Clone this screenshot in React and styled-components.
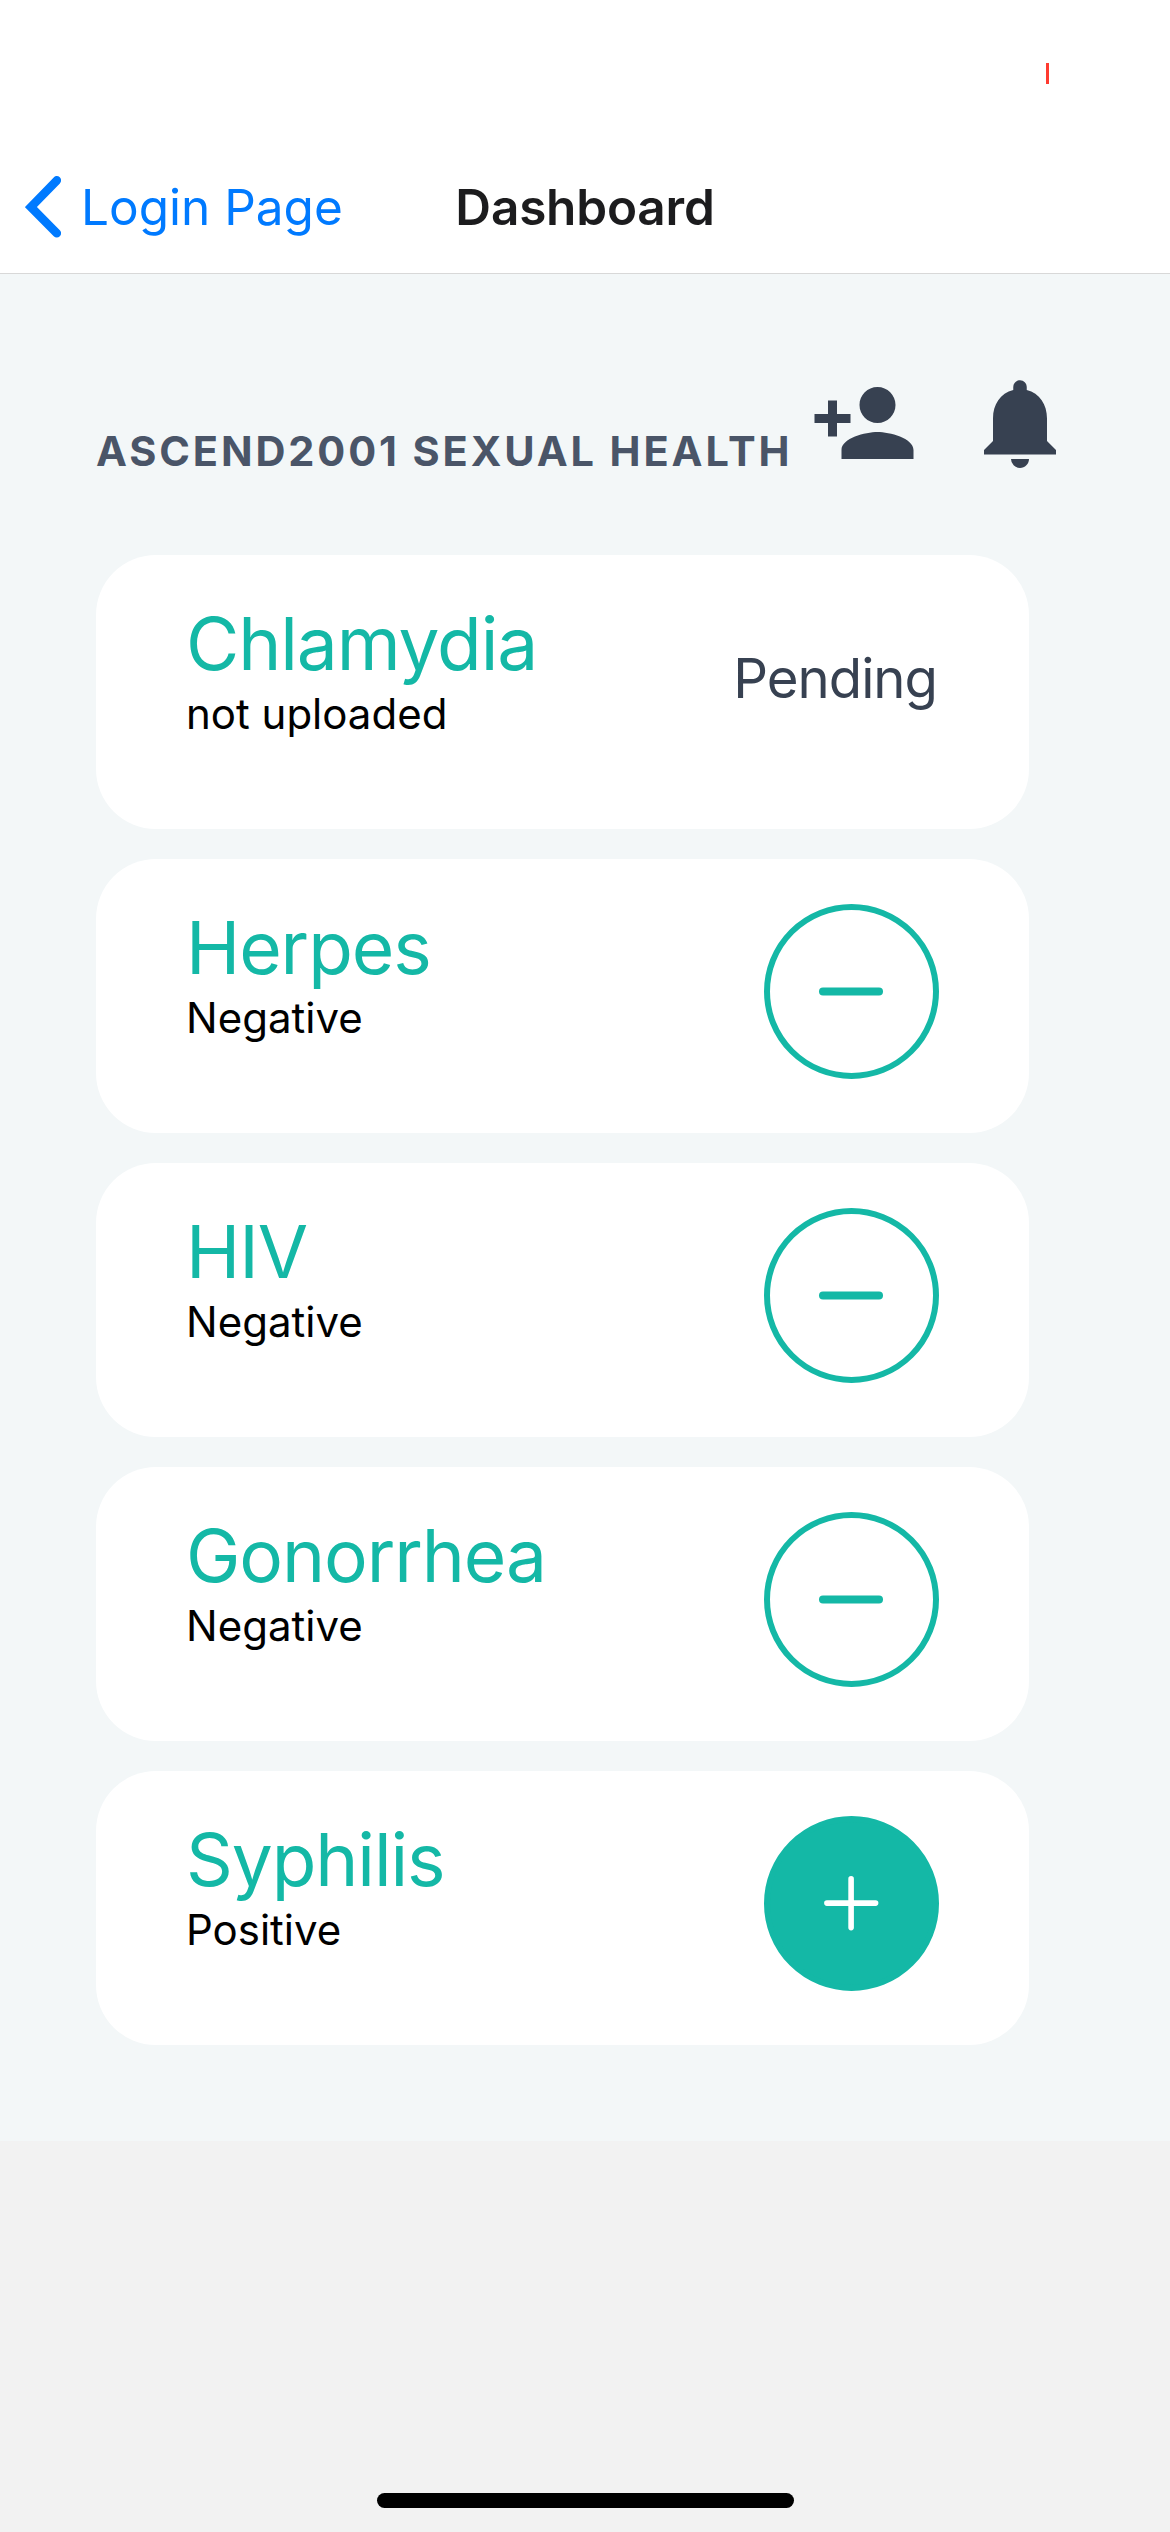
import React from 'react';
import styled, { createGlobalStyle } from 'styled-components';
import { MdPersonAdd, MdNotifications } from 'react-icons/md';

const GlobalStyle = createGlobalStyle`
  * {
    box-sizing: border-box;
  }

  body {
    margin: 0;
    background: #f2f2f2;
    font-family: Inter, "Liberation Sans", sans-serif;
  }
`;

const Screen = styled.div`
  width: 1170px;
  height: 2532px;
  display: flex;
  flex-direction: column;
  background: #f2f2f2;
  overflow: hidden;
`;

const StatusBar = styled.div`
  height: 141px;
  display: flex;
  justify-content: flex-end;
  padding: 63px 121px 0 0;
  background: #fff;
`;

const BatteryLevel = styled.div`
  width: 3px;
  height: 21px;
  background: #ff3b30;
`;

const NavBar = styled.div`
  height: 133px;
  display: grid;
  grid-template-columns: 1fr auto 1fr;
  align-items: center;
  background: #fff;
  border-bottom: 1px solid #d8d8d8;
`;

const BackButton = styled.button`
  display: flex;
  align-items: center;
  gap: 20px;
  padding: 0 0 0 25px;
  border: none;
  background: none;
  color: #007aff;
  font-family: inherit;
  font-size: 49.5px;
  line-height: 62px;
  white-space: nowrap;
`;

const NavTitle = styled.h1`
  margin: 0;
  color: #1c1c1e;
  font-size: 49.5px;
  font-weight: 600;
  line-height: 62px;
  letter-spacing: -0.2px;
`;

const Content = styled.main`
  height: 1867px;
  padding: 95px 96px 0;
  background: #f3f7f8;
`;

const Header = styled.div`
  height: 186px;
  display: flex;
  justify-content: space-between;
  align-items: flex-start;
`;

const Title = styled.h2`
  margin: 0;
  padding-top: 52px;
  color: #4a5568;
  font-size: 41.5px;
  font-weight: 700;
  line-height: 60px;
  letter-spacing: 2.88px;
  text-transform: uppercase;
  white-space: nowrap;
`;

const Actions = styled.div`
  display: flex;
  gap: 48px;
  color: #374151;
  font-size: 108px;

  svg {
    display: block;
  }
`;

const Results = styled.div`
  width: 933px;
  display: flex;
  flex-direction: column;
  gap: 30px;
`;

const Card = styled.div`
  height: 274px;
  display: flex;
  justify-content: space-between;
  align-items: flex-start;
  padding: 45px 90px;
  background: #fff;
  border-radius: 60px;
`;

const Name = styled.div`
  color: #14b8a6;
  font-size: 73px;
  line-height: 87px;
  letter-spacing: -1.1px;
`;

const Status = styled.div`
  color: #000;
  font-size: 42px;
  line-height: 53px;
`;

const Pending = styled.div`
  margin: 45px 2px 0 0;
  color: #374151;
  font-size: 54.5px;
  line-height: 66px;
  letter-spacing: -1px;
`;

const Badge = styled.div`
  width: 175px;
  height: 175px;
  border: 6px solid #14b8a6;
  border-radius: 50%;
  background: ${({ $filled }) => ($filled ? '#14b8a6' : '#fff')};
  color: ${({ $filled }) => ($filled ? '#fff' : '#14b8a6')};

  svg {
    display: block;
  }
`;

const HomeIndicator = styled.div`
  width: 417px;
  height: 15px;
  margin: auto auto 24px 377px;
  border-radius: 8px;
  background: #000;
`;

const results = [
  { name: 'Chlamydia', status: 'not uploaded', type: 'pending' },
  { name: 'Herpes', status: 'Negative', type: 'negative' },
  { name: 'HIV', status: 'Negative', type: 'negative' },
  { name: 'Gonorrhea', status: 'Negative', type: 'negative' },
  { name: 'Syphilis', status: 'Positive', type: 'positive' },
];

const BackIcon = () => (
  <svg width="36" height="62" viewBox="0 0 36 62" fill="none">
    <path d="M31.8 4.4 5.9 31 31.8 57.2" stroke="currentColor" strokeWidth="8.6" strokeLinecap="round" />
  </svg>
);

const ResultIcon = ({ positive }) => (
  <Badge $filled={positive}>
    <svg width="163" height="163" viewBox="0 0 163 163" stroke="currentColor" strokeLinecap="round">
      {positive ? (
        <path d="M56.9 81.1H105.6M81.1 56.9V105.6" strokeWidth="5.6" />
      ) : (
        <path d="M53 81.5H109" strokeWidth="8" />
      )}
    </svg>
  </Badge>
);

const ResultCard = ({ name, status, type }) => (
  <Card>
    <div>
      <Name>{name}</Name>
      <Status>{status}</Status>
    </div>
    {type === 'pending' ? <Pending>Pending</Pending> : <ResultIcon positive={type === 'positive'} />}
  </Card>
);

const App = () => {
  return (
    <Screen>
      <GlobalStyle />
      <StatusBar>
        <BatteryLevel />
      </StatusBar>
      <NavBar>
        <BackButton>
          <BackIcon />
          Login Page
        </BackButton>
        <NavTitle>Dashboard</NavTitle>
      </NavBar>
      <Content>
        <Header>
          <Title>Ascend2001 Sexual Health</Title>
          <Actions>
            <MdPersonAdd />
            <MdNotifications />
          </Actions>
        </Header>
        <Results>
          {results.map((result) => (
            <ResultCard key={result.name} {...result} />
          ))}
        </Results>
      </Content>
      <HomeIndicator />
    </Screen>
  );
};

export default App;
